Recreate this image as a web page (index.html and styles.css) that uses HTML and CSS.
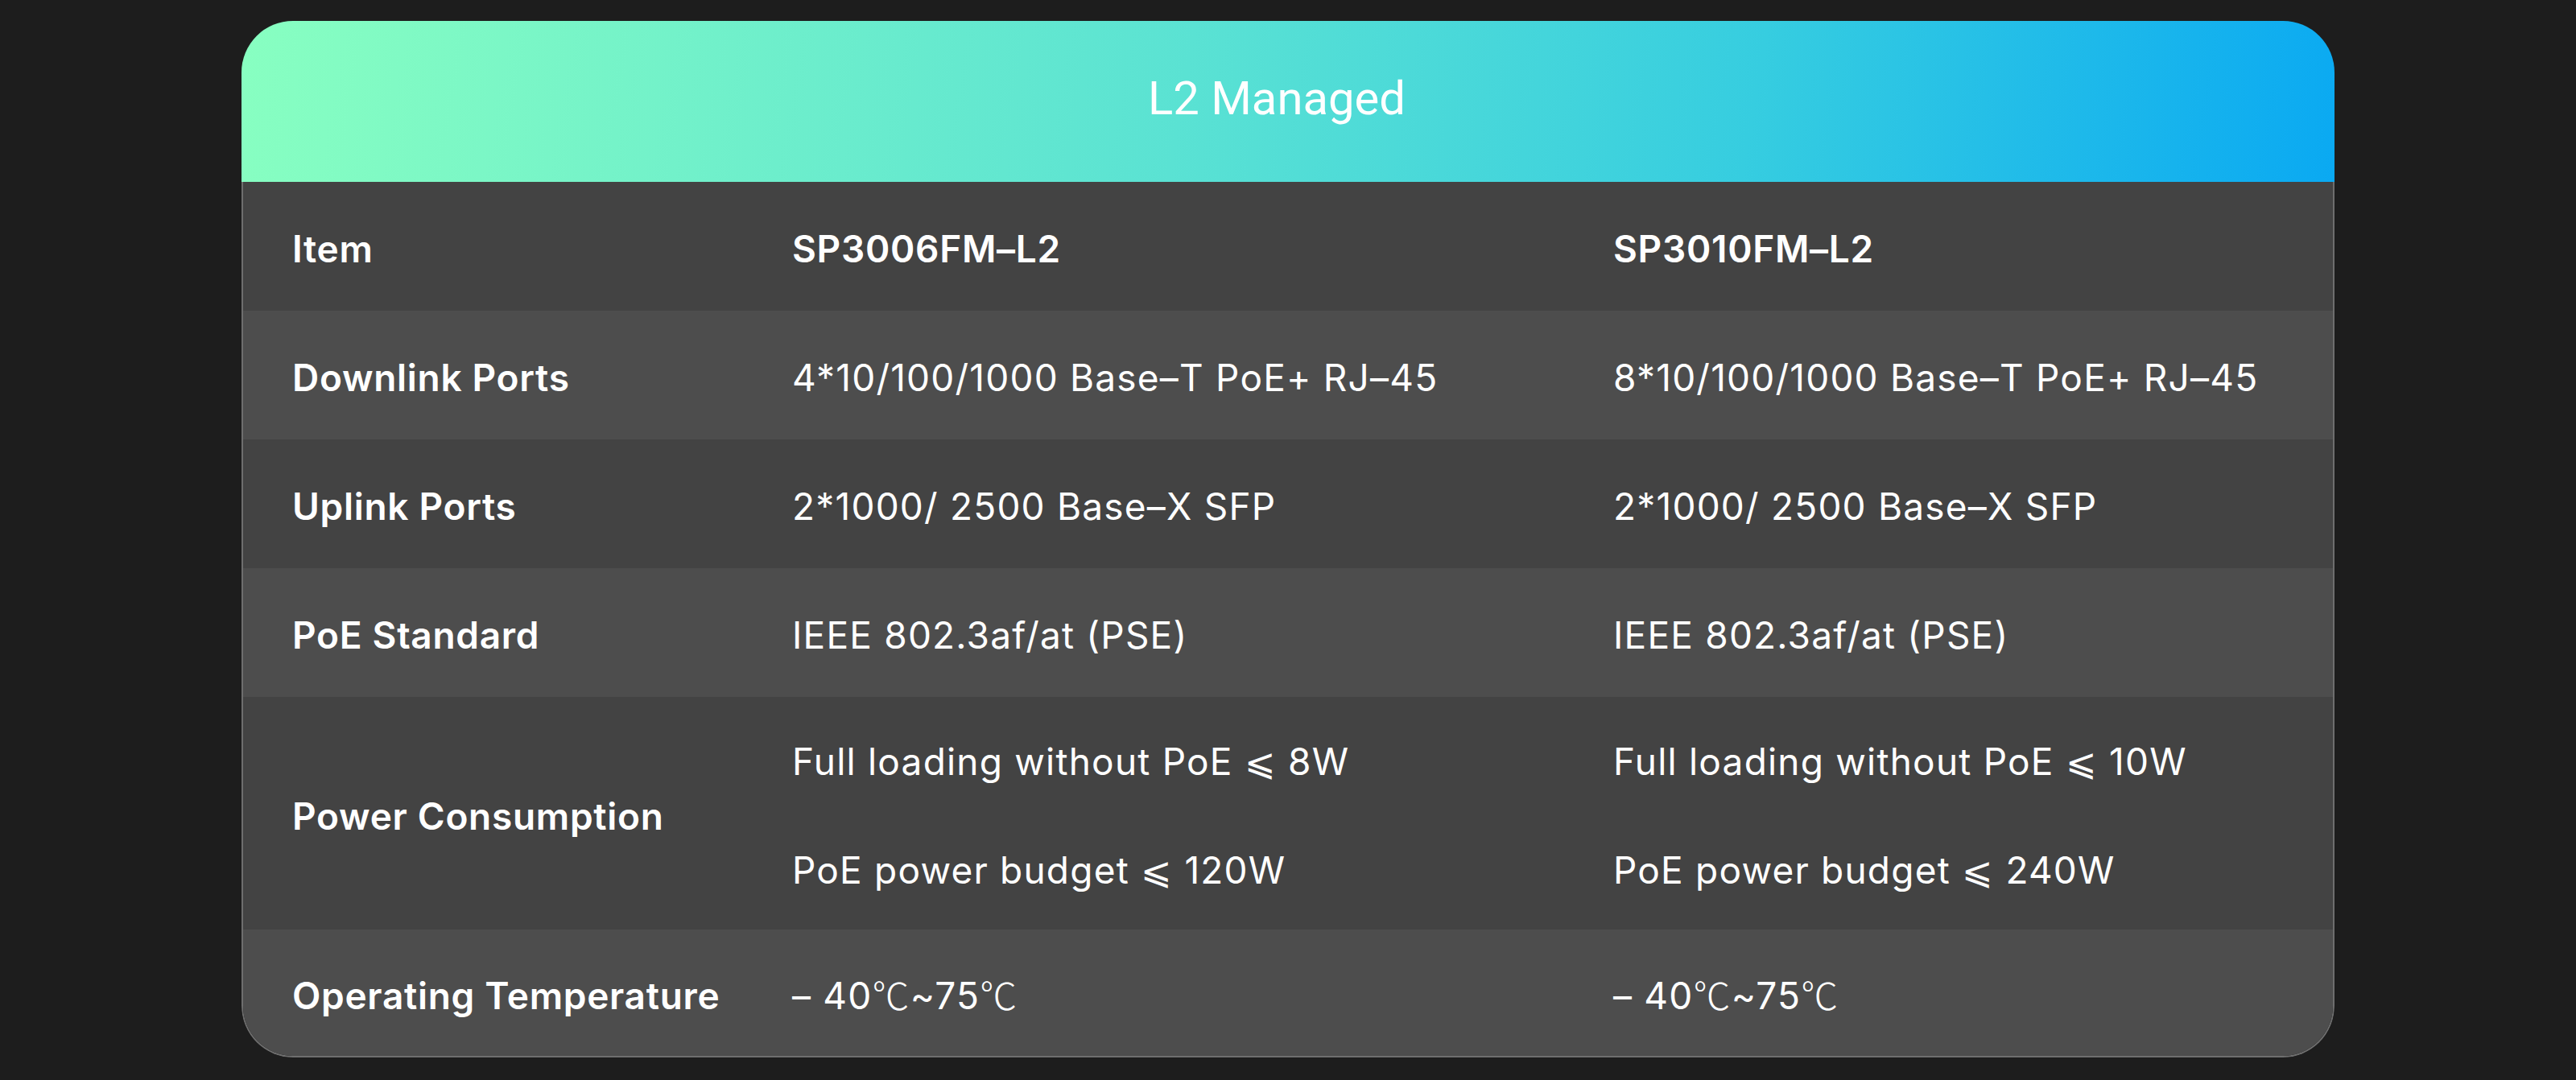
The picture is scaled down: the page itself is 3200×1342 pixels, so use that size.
FILE: index.html
```html
<!DOCTYPE html>
<html lang="en">
<head>
<meta charset="utf-8">
<title>L2 Managed</title>
<link rel="stylesheet" href="styles.css">
</head>
<body>
<div class="card">
  <div class="card-head">L2 Managed</div>
  <div class="card-body">
    <div class="row dark">
      <div class="cell label">Item</div>
      <div class="cell label">SP3006FM–L2</div>
      <div class="cell label">SP3010FM–L2</div>
    </div>
    <div class="row light">
      <div class="cell label">Downlink Ports</div>
      <div class="cell">4*10/100/1000 Base–T PoE+ RJ–45</div>
      <div class="cell">8*10/100/1000 Base–T PoE+ RJ–45</div>
    </div>
    <div class="row dark">
      <div class="cell label">Uplink Ports</div>
      <div class="cell">2*1000/ 2500 Base–X SFP</div>
      <div class="cell">2*1000/ 2500 Base–X SFP</div>
    </div>
    <div class="row light">
      <div class="cell label">PoE Standard</div>
      <div class="cell">IEEE 802.3af/at (PSE)</div>
      <div class="cell">IEEE 802.3af/at (PSE)</div>
    </div>
    <div class="row dark tall">
      <div class="cell label">Power Consumption</div>
      <div class="cell multi">
        <div class="line">Full loading without PoE <span class="sym">⩽</span> 8W</div>
        <div class="line">PoE power budget <span class="sym">⩽</span> 120W</div>
      </div>
      <div class="cell multi">
        <div class="line">Full loading without PoE <span class="sym">⩽</span> 10W</div>
        <div class="line">PoE power budget <span class="sym">⩽</span> 240W</div>
      </div>
    </div>
    <div class="row light last">
      <div class="cell label">Operating Temperature</div>
      <div class="cell">– 40<span class="deg">℃</span>~75<span class="deg">℃</span></div>
      <div class="cell">– 40<span class="deg">℃</span>~75<span class="deg">℃</span></div>
    </div>
  </div>
</div>
</body>
</html>
```
FILE: styles.css
```css
html, body {
  margin: 0;
  padding: 0;
  background: #1d1d1d;
}

body {
  font-family: Inter, "Liberation Sans", "Noto Sans CJK SC", sans-serif;
  color: #ffffff;
}

.card {
  width: 2600px;
  margin: 26px 0 0 300px;
  border-radius: 64px;
  overflow: hidden;
}

.card-head {
  height: 200px;
  box-sizing: border-box;
  padding-bottom: 8px;
  padding-right: 28px;
  line-height: 192px;
  text-align: center;
  font-family: Roboto, "Liberation Sans", sans-serif;
  font-size: 58px;
  font-weight: 400;
  color: #ffffff;
  background: linear-gradient(100deg, #88ffc1 0%, #5ae2d3 45%, #36cde0 72%, #0aa9f2 100%);
}

.card-body {
  border: 2px solid #6e6e6e;
  border-top: none;
  border-radius: 0 0 64px 64px;
  overflow: hidden;
}

.row {
  display: grid;
  grid-template-columns: 621px 1020px 1fr;
  align-items: center;
  min-height: 160px;
  box-sizing: border-box;
  padding-top: 8px;
  font-size: 46px;
  font-weight: 400;
}

.row.dark { background: #434343; }
.row.light { background: #4d4d4d; }

.row.tall {
  min-height: 289px;
  padding-top: 0;
}

.row.last { min-height: 157px; }

.cell {
  padding-left: 61px;
  white-space: nowrap;
  line-height: 1.2;
  letter-spacing: 1.2px;
}

.row.tall .label { padding-top: 8px; }

.label {
  font-weight: 600;
  letter-spacing: 0.7px;
}

.multi {
  padding-top: 13px;
  padding-bottom: 6px;
}

.multi .line {
  line-height: 135px;
}

.sym {
  font-family: "DejaVu Sans", "Noto Sans CJK SC", sans-serif;
  font-size: 46px;
  font-weight: 300;
  line-height: 0;
}

.deg {
  font-family: "Noto Sans CJK SC", "DejaVu Sans", sans-serif;
  font-weight: 300;
  line-height: 0;
}
```
